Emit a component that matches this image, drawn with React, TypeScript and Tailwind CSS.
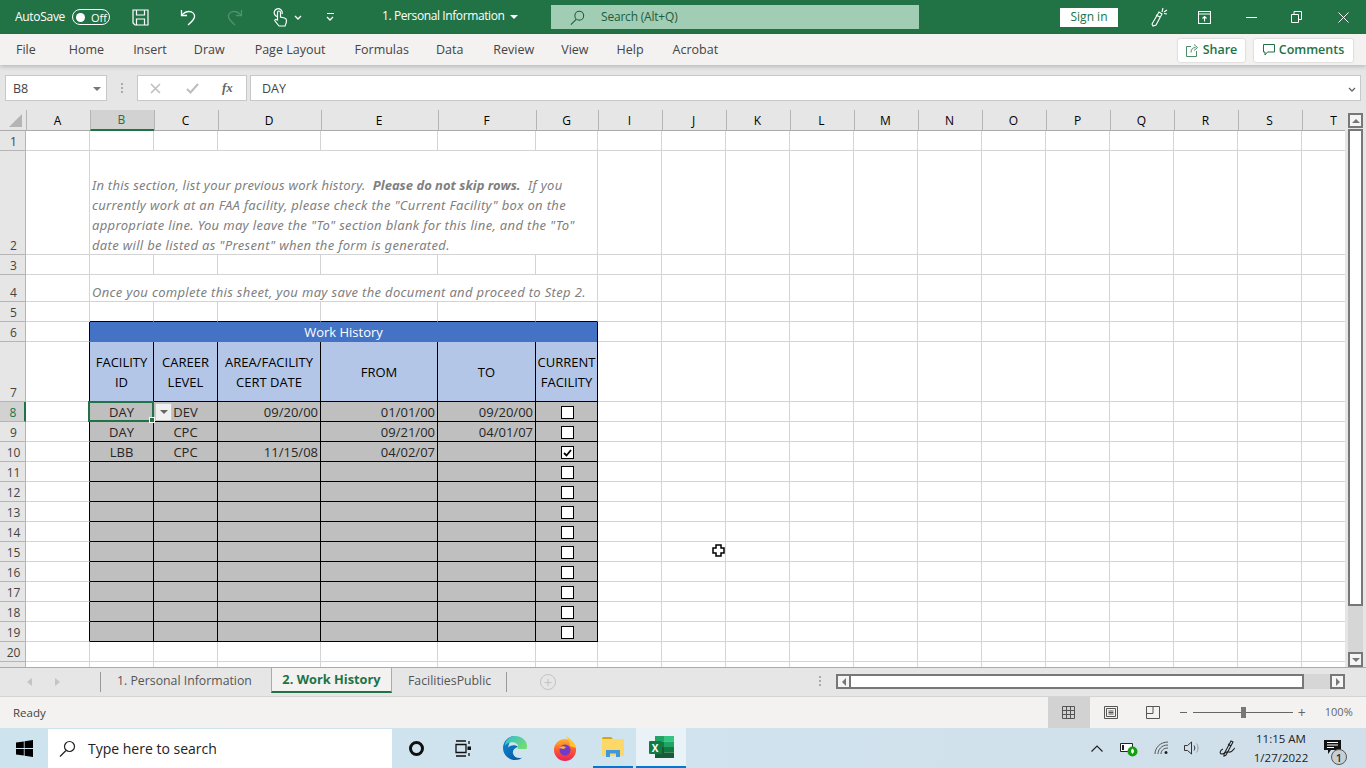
import React from 'react';

const rowHeights = [20, 104, 20, 27, 20, 20, 60, 20, 20, 20, 20, 20, 20, 20, 20, 20, 20, 20, 20, 20, 20];
const colLetters = ['A', 'B', 'C', 'D', 'E', 'F', 'G', 'I', 'J', 'K', 'L', 'M', 'N', 'O', 'P', 'Q', 'R', 'S', 'T'];
const gridCols = 'grid grid-cols-[26px_64px_64px_64px_103px_117px_98px_62px_repeat(12,64px)]';

const workRows = [
  ['DAY', 'DEV', '09/20/00', '01/01/00', '09/20/00'],
  ['DAY', 'CPC', '', '09/21/00', '04/01/07'],
  ['LBB', 'CPC', '11/15/08', '04/02/07', ''],
];

const Save = () => (
  <svg width="17" height="17" viewBox="0 0 17 17" fill="none" stroke="white" strokeWidth="1.2">
    <path d="M1 1h15v15H3l-2-2z" />
    <path d="M4.500 1v5h8V1M4.500 16v-6h8v6" />
  </svg>
);

const Undo = ({ dim }: { dim?: boolean }) => (
  <svg width="16" height="17" viewBox="0 0 16 17" fill="none" stroke={dim ? '#4f9070' : 'white'} strokeWidth="1.3" className={dim ? '-scale-x-100' : ''}>
    <path d="M1.500 1v5.500H7" />
    <path d="M1.500 6.500C4 3.500 6.500 2.500 9 2.500c3.500 0 6 2.500 5.500 5.500-.3 1.500-3 5-6.500 8" />
  </svg>
);

const Touch = () => (
  <svg width="16" height="19" viewBox="0 0 16 19" fill="none" stroke="white" strokeWidth="1.2">
    <path d="M5 8.500A4 4 0 1 1 10 6" />
    <path d="M5.500 12V4.500a1.500 1.500 0 0 1 3 0V9l4 1c1.500.4 2 1 2 2.500 0 2-.5 3.500-1.500 5.500H7l-4-5c-.8-1.200.7-2 1.500-1.200z" />
  </svg>
);

const SmallChevron = ({ color = 'white' }: { color?: string }) => (
  <svg width="8" height="5" viewBox="0 0 8 5" fill="none" stroke={color} strokeWidth="1.3">
    <path d="M1 1l3 3 3-3" />
  </svg>
);

const Magnifier = ({ color, size = 17 }: { color: string; size?: number }) => (
  <svg width={size} height={size} viewBox="0 0 17 17" fill="none" stroke={color} strokeWidth="1.2">
    <circle cx="10.500" cy="6.500" r="5" />
    <path d="M7 10.500L1 16.500" />
  </svg>
);

const Dots = () => (
  <div className="flex flex-col gap-[2px]">
    <div className="w-[2px] h-[2px] bg-[#aaa]" />
    <div className="w-[2px] h-[2px] bg-[#aaa]" />
    <div className="w-[2px] h-[2px] bg-[#aaa]" />
  </div>
);

const TitleBar = () => (
  <div className="flex items-center h-[34px] bg-[#217346] text-white text-[12px] shrink-0 [&>*]:shrink-0">
    <span className="ml-[15px] w-[50px] tracking-[-0.3px]">AutoSave</span>
    <div className="ml-[7px] w-[38px] h-[16px] rounded-full border border-white flex items-center pl-[3px] gap-[6px]">
      <div className="w-[9px] h-[9px] rounded-full bg-white" />
      <span className="text-[11px] leading-none">Off</span>
    </div>
    <div className="ml-[22px] flex"><Save /></div>
    <div className="ml-[31px] flex"><Undo /></div>
    <div className="ml-[31px] flex"><Undo dim /></div>
    <div className="ml-[29px] flex"><Touch /></div>
    <div className="ml-[6px] flex"><SmallChevron /></div>
    <div className="ml-[24px] flex flex-col items-center gap-[2px]">
      <div className="w-[7px] h-px bg-white" />
      <SmallChevron />
    </div>
    <span className="ml-[48px] w-[124px] -mt-[2px] whitespace-nowrap tracking-[-0.4px]">1. Personal Information</span>
    <div className="ml-[4px] w-0 h-0 border-x-[4px] border-x-transparent border-t-[4px] border-t-white" />
    <div className="ml-[33px] w-[368px] h-[24px] bg-[#a0cdb4] flex items-center pl-[19px] text-[#1e5c3c] tracking-[-0.2px]">
      <Magnifier color="#1e5c3c" size={15} />
      <span className="ml-[16px]">Search (Alt+Q)</span>
    </div>
    <div className="ml-[141px] w-[58px] h-[19px] bg-white text-[#217346] flex items-center justify-center">Sign in</div>
    <svg className="ml-[32px]" width="18" height="20" viewBox="0 0 18 20" fill="none" stroke="white" strokeWidth="1.1">
      <path d="M9 5L2 17l1 2 3-1 6-11zM6 8l4 2M13 1l-1 4M17 3l-3 2M17 7l-3-.5" />
    </svg>
    <svg className="ml-[30px]" width="13" height="13" viewBox="0 0 13 13" fill="none" stroke="white" strokeWidth="1.1">
      <path d="M.5 .5h12v12H.5zM.5 3h12M6.500 10.500V5.500M4.500 7.500l2-2 2 2" />
    </svg>
    <div className="ml-[35px] w-[11px] h-px bg-white" />
    <svg className="ml-[34px]" width="11" height="12" viewBox="0 0 11 12" fill="none" stroke="white" strokeWidth="1">
      <path d="M.5 3.500h7v8h-7zM3 3.500V.5h7.500v8H7.500" />
    </svg>
    <svg className="ml-[36px]" width="11" height="11" viewBox="0 0 11 11" stroke="white" strokeWidth="1">
      <path d="M.5 .5l10 10M10.500 .5l-10 10" />
    </svg>
  </div>
);

const Ribbon = () => (
  <div className="relative z-10 flex items-center h-[31px] pt-[1px] bg-[#f3f2f1] text-[12.500px] text-[#444] shrink-0 shadow-[0_2px_4px_rgba(0,0,0,0.18)]">
    <span className="ml-[16px]">File</span>
    <span className="ml-[33px]">Home</span>
    <span className="ml-[29px]">Insert</span>
    <span className="ml-[27px]">Draw</span>
    <span className="ml-[30px]">Page Layout</span>
    <span className="ml-[29px]">Formulas</span>
    <span className="ml-[27px]">Data</span>
    <span className="ml-[30px]">Review</span>
    <span className="ml-[27px]">View</span>
    <span className="ml-[28px]">Help</span>
    <span className="ml-[29px]">Acrobat</span>
    <div className="ml-auto flex items-center gap-[9px] mr-[13px] text-[#217346] text-[12.500px] font-semibold">
      <div className="h-[23px] w-[67px] bg-white shadow-[0_0_2px_rgba(0,0,0,0.25)] rounded-[2px] flex items-center justify-center gap-[4px]">
        <svg width="13" height="14" viewBox="0 0 13 14" fill="none" stroke="#4d8a68" strokeWidth="1">
          <path d="M5 3.500H.5v10h10V8M5 9.500C5 6 7 4.500 9.500 4.500M8 1.500l3.500 3-3.500 3" />
        </svg>
        Share
      </div>
      <div className="h-[23px] w-[99px] bg-white shadow-[0_0_2px_rgba(0,0,0,0.25)] rounded-[2px] flex items-center justify-center gap-[4px]">
        <svg width="12" height="12" viewBox="0 0 12 12" fill="none" stroke="#217346" strokeWidth="1">
          <path d="M.5 .5h11v7.500H4.500L2 11V8H.5z" />
        </svg>
        Comments
      </div>
    </div>
  </div>
);

const FormulaBar = () => (
  <div className="flex items-center h-[45px] bg-[#e6e6e6] text-[12.500px] text-[#444] pt-[1px] shrink-0">
    <div className="ml-[5px] w-[102px] h-[26px] pt-[2px] bg-white border border-[#c8c8c8] flex items-center justify-between pl-[7px] pr-[5px]">
      B8
      <div className="w-0 h-0 border-x-[4px] border-x-transparent border-t-[4px] border-t-[#777]" />
    </div>
    <div className="ml-[14px]"><Dots /></div>
    <div className="ml-[14px] w-[110px] h-[26px] bg-white border border-[#c8c8c8] flex items-center pl-[12px]">
      <svg width="11" height="11" viewBox="0 0 11 11" stroke="#bdbdbd" strokeWidth="1.500"><path d="M1 1l9 9M10 1l-9 9" /></svg>
      <svg className="ml-[25px]" width="13" height="11" viewBox="0 0 13 11" fill="none" stroke="#bdbdbd" strokeWidth="2"><path d="M1 6l3.500 3.500L12 1" /></svg>
      <span className="ml-[23px] font-['Liberation_Serif',serif] italic font-bold text-[13px] text-[#666]">fx</span>
    </div>
    <div className="ml-[3px] w-[1111px] h-[26px] pt-[2px] bg-white border border-[#c8c8c8] flex items-center pl-[11px] justify-between pr-[4px]">
      DAY
      <SmallChevron color="#666" />
    </div>
  </div>
);

const Checkbox = ({ checked }: { checked?: boolean }) => (
  <div className="w-[13px] h-[13px] bg-white border border-black flex items-center justify-center">
    {checked && (
      <svg width="9" height="8" viewBox="0 0 9 8" fill="none" stroke="black" strokeWidth="1.800">
        <path d="M1 4l2.500 2.500L8 1" />
      </svg>
    )}
  </div>
);

const Sheet = () => {
  const light = 'border-r border-b border-[#d4d4d4]';
  return (
    <div className="relative flex-1 min-h-0 overflow-hidden bg-white">
      <div className="h-full w-[1345px] overflow-hidden">
        {/* column headers */}
        <div className={`${gridCols} h-[21px] bg-[#e6e6e6] text-[12px] text-black`}>
          <div className="flex items-end justify-end pr-[4px] pb-[3px] border-b border-[#ababab]">
            <div className="w-0 h-0 border-l-[13px] border-l-transparent border-b-[13px] border-b-[#b4b4b4]" />
          </div>
          {colLetters.map((c) => (
            <div
              key={c}
              className={`flex items-center justify-center pt-[1px] pr-[2px] border-l border-[#b5b5b5] ${c === 'B' ? 'bg-[#d2d2d2] text-[#217346] border-b-2 border-b-[#217346]' : 'border-b border-b-[#ababab]'}`}
            >
              {c}
            </div>
          ))}
        </div>

        {/* rows */}
        <div className={`${gridCols} grid-rows-[20px_104px_20px_27px_20px_20px_60px_repeat(14,20px)] text-[13px] text-[#262626]`}>
          {rowHeights.map((_, i) => {
            const r = i + 1;
            const inTable = r >= 6 && r <= 19;
            const data = r >= 8 && r <= 19 ? workRows[r - 8] ?? ['', '', '', '', ''] : null;
            const black = 'border-r border-b border-black pt-[2px]';
            return (
              <React.Fragment key={r}>
                <div
                  className={`flex items-end justify-center pl-[2px] leading-[16px] text-[12px] border-b border-r border-[#b5b5b5] ${r === 8 ? 'bg-[#d2d2d2] text-[#217346] border-r-2 border-r-[#217346]' : 'bg-[#e6e6e6] text-[#444]'}`}
                >
                  {r <= 20 ? r : ''}
                </div>
                <div className={`border-b border-b-[#d4d4d4] border-r ${inTable ? 'border-r-black' : 'border-r-[#d4d4d4]'}`} />

                {r === 2 && (
                  <div className={`col-span-6 ${light} flex items-end pl-[2px] font-['Noto_Sans',sans-serif] italic leading-[20px] tracking-[0.33px] text-[#7f7f7f] whitespace-pre`}>
                    <div className="-mb-[1px]">
                      <span className="tracking-[0.24px]">In this section, list your previous work history.  </span><b className="tracking-normal">Please do not skip rows.</b>  If you<br />
                      currently work at an FAA facility, please check the "Current Facility" box on the<br />
                      appropriate line. You may leave the "To" section blank for this line, and the "To"<br />
                      date will be listed as "Present" when the form is generated.
                    </div>
                  </div>
                )}
                {r === 4 && (
                  <div className={`col-span-6 ${light} flex items-end pl-[2px] font-['Noto_Sans',sans-serif] italic leading-[20px] tracking-[0.33px] text-[#7f7f7f] whitespace-pre`}>
                    <div className="-mb-[1px]">Once you complete this sheet, you may save the document and proceed to Step 2.</div>
                  </div>
                )}
                {r === 6 && (
                  <div className="col-span-6 bg-[#4472c4] border-r border-black pt-[2px] flex items-center justify-center text-white">Work History</div>
                )}
                {r === 7 &&
                  [['FACILITY', 'ID'], ['CAREER', 'LEVEL'], ['AREA/FACILITY', 'CERT DATE'], ['FROM'], ['TO'], ['CURRENT', 'FACILITY']].map((lines) => (
                    <div key={lines[0]} className="border-r border-b border-black bg-[#b4c6e7] flex flex-col items-center justify-center leading-[20px] text-black whitespace-nowrap">
                      {lines.map((l) => <span key={l}>{l}</span>)}
                    </div>
                  ))}
                {data && (
                  <>
                    <div className={`${black} relative bg-[#bfbfbf] flex items-center justify-center`}>
                      {data[0]}
                      {r === 8 && (
                        <div className="absolute z-10 -left-[2px] -top-px w-[66px] h-[21px] border-2 border-[#217346]">
                          <div className="absolute -right-[3px] -bottom-[3px] w-[6px] h-[6px] bg-[#217346] border border-white" />
                        </div>
                      )}
                    </div>
                    <div className={`${black} relative bg-[#bfbfbf] flex items-center justify-center`}>
                      {data[1]}
                      {r === 8 && (
                        <div className="absolute left-[1px] top-[1px] w-[17px] h-[18px] bg-[#f0f0f0] border border-[#c8c8c8] flex items-center justify-center">
                          <div className="w-0 h-0 border-x-[4px] border-x-transparent border-t-[4px] border-t-[#666]" />
                        </div>
                      )}
                    </div>
                    <div className={`${black} bg-[#bfbfbf] flex items-center justify-end pr-[2px]`}>{data[2]}</div>
                    <div className={`${black} bg-[#bfbfbf] flex items-center justify-end pr-[2px]`}>{data[3]}</div>
                    <div className={`${black} bg-[#bfbfbf] flex items-center justify-end pr-[2px]`}>{data[4]}</div>
                    <div className={`${black} bg-[#bfbfbf] flex items-center justify-center pl-[1px]`}>
                      <Checkbox checked={r === 10} />
                    </div>
                  </>
                )}
                {r !== 2 && r !== 4 && !inTable &&
                  [0, 1, 2, 3, 4, 5].map((c) => (
                    <div key={c} className={`border-r border-r-[#d4d4d4] border-b ${r === 5 ? 'border-b-black' : 'border-b-[#d4d4d4]'}`} />
                  ))}
                {colLetters.slice(7).map((c) => (
                  <div key={c} className={light} />
                ))}
              </React.Fragment>
            );
          })}
        </div>
      </div>

      {/* vertical scrollbar */}
      <div className="absolute right-0 top-0 bottom-0 w-[21px] bg-[#e6e6e6] flex flex-col items-start pl-[3px] pt-[3px]">
        <div className="w-[15px] h-[15px] bg-[#f5f5f5] border-2 border-[#777] flex items-center justify-center">
          <div className="w-0 h-0 border-x-[4px] border-x-transparent border-b-[4px] border-b-[#777]" />
        </div>
        <div className="w-[15px] h-[477px] bg-white border-2 border-[#777] mt-[1px]" />
        <div className="w-[15px] flex-1 bg-[#d6d6d6]" />
        <div className="w-[15px] h-[15px] bg-[#f5f5f5] border-2 border-[#777] flex items-center justify-center">
          <div className="w-0 h-0 border-x-[4px] border-x-transparent border-t-[4px] border-t-[#777]" />
        </div>
      </div>
    </div>
  );
};

const SheetTabs = () => (
  <div className="flex items-start h-[29px] bg-[#e6e6e6] border-t border-[#ababab] text-[12.300px] text-[#555] shrink-0">
    <div className="ml-[27px] mt-[10px] w-0 h-0 border-y-[4px] border-y-transparent border-r-[5px] border-r-[#c4c4c4]" />
    <div className="ml-[23px] mt-[10px] w-0 h-0 border-y-[4px] border-y-transparent border-l-[5px] border-l-[#c4c4c4]" />
    <div className="ml-[40px] mt-[4px] h-[20px] w-px bg-[#999]" />
    <span className="ml-[16px] w-[154px] mt-[4px] whitespace-nowrap">1. Personal Information</span>
    <div className="h-[26px] w-[121px] -mt-px pt-[1px] bg-[#f3f2f1] border-x border-t border-[#ababab] border-b-[2px] border-b-[#217346] flex items-center justify-center font-bold text-[#217346] text-[12.800px]">2. Work History</div>
    <span className="ml-[16px] w-[98px] mt-[4px] whitespace-nowrap">FacilitiesPublic</span>
    <div className="mt-[4px] h-[20px] w-px bg-[#999]" />
    <div className="ml-[33px] mt-[6px] w-[16px] h-[16px] rounded-full border border-[#c4c4c4] flex items-center justify-center text-[#c4c4c4] text-[15px] leading-none">+</div>
    <div className="ml-[263px] mt-[8px]"><Dots /></div>
    <div className="ml-[15px] mt-[6px] w-[509px] h-[15px] flex">
      <div className="w-[15px] h-full bg-[#f5f5f5] border-2 border-[#777] flex items-center justify-center">
        <div className="w-0 h-0 border-y-[4px] border-y-transparent border-r-[4px] border-r-[#777]" />
      </div>
      <div className="w-[453px] h-full bg-white border-y-2 border-r-2 border-[#777]" />
      <div className="flex-1 bg-[#d6d6d6]" />
      <div className="w-[15px] h-full bg-[#f5f5f5] border-2 border-[#777] flex items-center justify-center">
        <div className="w-0 h-0 border-y-[4px] border-y-transparent border-l-[4px] border-l-[#777]" />
      </div>
    </div>
  </div>
);

const StatusBar = () => (
  <div className="flex items-center h-[32px] bg-[#f3f2f1] border-t border-[#d4d4d4] text-[11.500px] text-[#444] shrink-0">
    <span className="ml-[13px]">Ready</span>
    <div className="ml-[1002px] w-[42px] h-full bg-[#d2d2d2] flex items-center justify-center">
      <svg width="13" height="13" viewBox="0 0 13 13" fill="none" stroke="#555" strokeWidth="1">
        <path d="M.5 .5h12v12H.5zM4.500 .5v12M8.500 .5v12M.5 4.500h12M.5 8.500h12" />
      </svg>
    </div>
    <svg className="ml-[14px]" width="14" height="13" viewBox="0 0 14 13" fill="none" stroke="#555" strokeWidth="1">
      <path d="M.5 .5h13v12H.5zM2.500 2.500h9v8h-9zM4.500 5h5M4.500 6.500h5M4.500 8h5" />
    </svg>
    <svg className="ml-[28px]" width="14" height="13" viewBox="0 0 14 13" fill="none" stroke="#555" strokeWidth="1">
      <path d="M.5 .5h13v12H.5zM.5 7.500h6.500V.5" />
    </svg>
    <div className="ml-[20px] w-[7px] h-px bg-[#666]" />
    <div className="relative ml-[6px] w-[100px] h-px bg-[#666]">
      <div className="absolute left-[48px] -top-[5px] w-[5px] h-[11px] bg-[#777]" />
    </div>
    <span className="ml-[5px] text-[#666] text-[14px] leading-none">+</span>
    <span className="ml-[19px] text-[11px] text-[#666]">100%</span>
  </div>
);

const Taskbar = () => (
  <div className="flex items-center h-[40px] bg-gradient-to-r from-[#cde4ee] via-[#d0e3ee] to-[#d0dfea] shrink-0 text-[#111] [&>*]:shrink-0">
    <svg className="ml-[16px]" width="17" height="17" viewBox="0 0 17 17" fill="black">
      <path d="M0 2.500L7.800 1.400V8H0zM8.600 1.300L17 0v8H8.600zM0 9h7.800v6.600L0 14.500zM8.600 9H17v8l-8.400-1.200z" />
    </svg>
    <div className="ml-[15px] w-[344px] h-[39px] mt-[1px] bg-white flex items-center pl-[11px] text-[14px] text-[#222]">
      <Magnifier color="#222" />
      <span className="ml-[12px]">Type here to search</span>
    </div>
    <div className="ml-[17px] w-[15px] h-[15px] rounded-full border-[3px] border-[#111]" />
    <svg className="ml-[31px]" width="17" height="17" viewBox="0 0 17 17" fill="none" stroke="#111" strokeWidth="1.300">
      <path d="M1 1h10M1 16h10M1 4.500h10v8H1zM14 1v3M14 13v3" />
      <rect x="12.500" y="6.500" width="3.500" height="3.500" fill="#111" stroke="none" />
    </svg>
    <svg className="ml-[31px]" width="24" height="24" viewBox="0 0 24 24">
      <defs>
        <linearGradient id="edgeA" x1="0" y1="0" x2="1" y2="1">
          <stop offset="0" stopColor="#0c8fd6" />
          <stop offset="1" stopColor="#0a4f9a" />
        </linearGradient>
        <linearGradient id="edgeB" x1="0" y1="0" x2="1" y2="0.600">
          <stop offset="0" stopColor="#32bdd0" />
          <stop offset="1" stopColor="#6fdc75" />
        </linearGradient>
      </defs>
      <path d="M12 0a12 12 0 0 0-12 12c0 7 6 12 12 12 3 0 5.500-.8 7.500-2.500-4 1.500-8.500 0-9.500-4-.7-3 1.500-6 5-6.500-2-2.500-7-2.500-10 .5C6.500 6 9 .5 12 0z" fill="url(#edgeA)" />
      <path d="M12 0C6.500 0 2 4.500 2 9.500 5 6 11 5 14 8c1.500 1.500 1.500 3.500.5 5h9c.5-1 .5-2 .5-3C24 4.500 18.500 0 12 0z" fill="url(#edgeB)" />
    </svg>
    <svg className="ml-[26px]" width="24" height="25" viewBox="0 0 24 25">
      <defs>
        <linearGradient id="foxA" x1="0.500" y1="0" x2="0.500" y2="1">
          <stop offset="0" stopColor="#ffb52b" />
          <stop offset="0.500" stopColor="#ff5a2e" />
          <stop offset="1" stopColor="#e5225a" />
        </linearGradient>
      </defs>
      <circle cx="12" cy="14" r="11" fill="url(#foxA)" />
      <path d="M13 0c5 3 9 7 10 12l-6-2c0-4-2-7-4-10z" fill="#ffc631" />
      <path d="M3 9c2-3 5-4 8-4l-2 3z" fill="#ff9a2b" />
      <circle cx="12" cy="14" r="5.500" fill="#6f3bc7" />
      <path d="M6 12c2-2 5-2 7-1l-2 2z" fill="#ffb52b" />
    </svg>
    <div className="ml-[16px] w-[40px] h-[40px] border-b-2 border-[#0078d4] flex items-center justify-center">
      <svg width="22" height="20" viewBox="0 0 22 20">
        <path d="M0 1.500A1.500 1.500 0 0 1 1.500 0H9l2 2H0z" fill="#d9a21b" />
        <rect x="0" y="2" width="22" height="17" rx="1" fill="#fcd868" />
        <path d="M4 20v-7h14v7h-4v-3.500H8V20z" fill="#3f97dc" />
      </svg>
    </div>
    <div className="ml-[3px] w-[50px] h-[40px] bg-[#e9f3f7] border-b-2 border-[#0078d4] flex items-center justify-center">
      <div className="relative w-[25px] h-[22px]">
        <svg width="25" height="22" viewBox="0 0 25 22">
          <rect x="6" y="0" width="9" height="5.500" fill="#21a366" />
          <rect x="15" y="0" width="10" height="5.500" fill="#33c481" />
          <rect x="6" y="5.500" width="9" height="5.500" fill="#107c41" />
          <rect x="15" y="5.500" width="10" height="5.500" fill="#21a366" />
          <rect x="6" y="11" width="9" height="11" fill="#185c37" />
          <rect x="15" y="11" width="10" height="5.500" fill="#107c41" />
          <rect x="15" y="16.500" width="10" height="5.500" fill="#185c37" />
        </svg>
        <div className="absolute left-0 top-[5px] w-[13px] h-[13px] rounded-[1px] bg-[#107c41] flex items-center justify-center text-white text-[10px] font-bold leading-none">X</div>
      </div>
    </div>
    <svg className="ml-[405px]" width="12" height="7" viewBox="0 0 12 7" fill="none" stroke="#222" strokeWidth="1.200">
      <path d="M.5 6.500L6 1l5.500 5.500" />
    </svg>
    <svg className="ml-[17px] mt-[2px]" width="18" height="15" viewBox="0 0 18 15">
      <path d="M.5 1.500h12v8H.5z" fill="white" stroke="#222" />
      <rect x="2" y="3" width="2" height="5" fill="#222" />
      <circle cx="12.500" cy="9.500" r="5" fill="#13a10e" />
      <path d="M12.500 6.500c2 1.500 2 3.500 0 5.500-2-2-2-4 0-5.500z" fill="white" />
    </svg>
    <svg className="ml-[16px]" width="15" height="14" viewBox="0 0 15 14" fill="none" stroke="#555" strokeWidth="1">
      <path d="M1 13C1 7 6 1 14 1M4 13c0-4 3-9 10-9M7 13c0-3 2-6 7-6" />
      <circle cx="12" cy="11.500" r="1.500" fill="#222" stroke="none" />
    </svg>
    <svg className="ml-[15px]" width="16" height="14" viewBox="0 0 16 14" fill="none" stroke="#333" strokeWidth="1">
      <path d="M.5 4.500h3l4-3.500v12l-4-3.500h-3z" />
      <path d="M10 4.500c1 1.500 1 3.500 0 5" />
      <path d="M12.500 2.500c2 2.500 2 6.500 0 9" stroke="#999" />
    </svg>
    <svg className="ml-[19px]" width="17" height="19" viewBox="0 0 17 19" fill="none" stroke="#222" strokeWidth="1.100">
      <path d="M5 15L12 2l2 1-7 13-2 1zM9 5l3 2" />
      <path d="M4 10C1 11 0 15 3 15s4-3 7-2 5-4 6-4" />
    </svg>
    <div className="ml-[19px] w-[52px] flex flex-col items-center text-[11.500px] leading-[19px] text-[#222] whitespace-nowrap">
      <span>11:15 AM</span>
      <span>1/27/2022</span>
    </div>
    <div className="relative ml-[16px] w-[24px] h-[26px]">
      <svg width="17" height="14" viewBox="0 0 17 14" className="ml-[1px] mt-[5px]">
        <path d="M0 0h17v10H7l-3 4v-4H0z" fill="#111" />
        <path d="M3 2.500h11M3 5h11M3 7.500h7" stroke="white" strokeWidth="1" />
      </svg>
      <div className="absolute left-[8px] top-[14px] w-[16px] h-[16px] rounded-full bg-[#c8cfd4] border border-[#555] flex items-center justify-center text-[11px] font-semibold leading-none text-[#333]">1</div>
    </div>
  </div>
);

export default function App() {
  return (
    <div className="relative w-[1366px] h-[768px] overflow-hidden flex flex-col font-['Open_Sans',sans-serif]">
      <TitleBar />
      <Ribbon />
      <FormulaBar />
      <Sheet />
      <SheetTabs />
      <StatusBar />
      <Taskbar />
      {/* excel cell pointer */}
      <svg className="absolute left-[712px] top-[544px]" width="13" height="13" viewBox="0 0 13 13">
        <path d="M4 1h5v3h3v5H9v3H4V9H1V4h3z" fill="white" stroke="black" strokeWidth="1.500" />
      </svg>
    </div>
  );
}
